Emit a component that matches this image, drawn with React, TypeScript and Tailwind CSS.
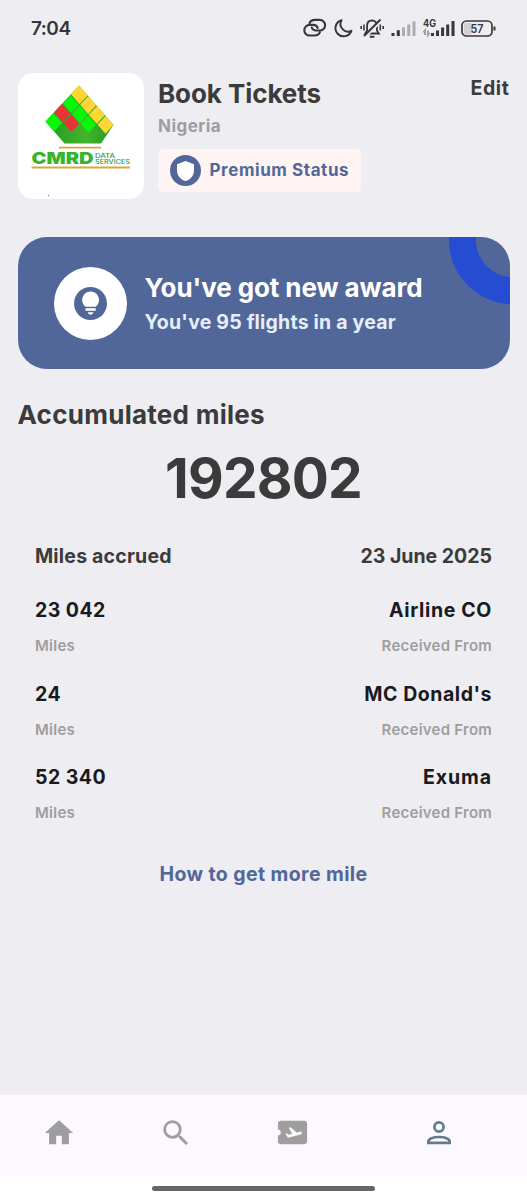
import React from "react";
import { MdAirplaneTicket, MdHome, MdSearch } from "react-icons/md";

const miles = [
  { amount: "23 042", from: "Airline CO", spacing: "tracking-[0.65px]" },
  { amount: "24", from: "MC Donald's", spacing: "tracking-[0.55px]" },
  { amount: "52 340", from: "Exuma", spacing: "tracking-[0.9px]" },
];

function StatusBar() {
  return (
    <div className="flex h-[57px] items-center justify-between px-[31px]">
      <span className="text-[19px] font-semibold leading-none tracking-[-0.5px] text-[#353538]">7:04</span>

      <svg className="mb-[2px]" width="194" height="30" viewBox="0 0 194 30" fill="none" stroke="#38383b" strokeWidth="2">
        {/* Link */}
        <g strokeLinecap="round" strokeWidth="2.1">
          <path d="M7.5 10.200C8.3 7.900 10.300 6.900 13 6.900h4.800a5.300 5.300 0 0 1 0 10.600h-3.500c-2.500 0-4-1.200-4.500-3" />
          <path d="M7.5 10.200C8.3 7.900 10.300 6.900 13 6.900h4.800a5.300 5.300 0 0 1 0 10.600h-3.500c-2.500 0-4-1.200-4.500-3" transform="rotate(180 12.700 14.700)" />
        </g>
        {/* Do not disturb */}
        <path d="M39.500 7.200a8.200 8.200 0 1 0 9.900 10.600 7.600 7.600 0 0 1-9.900-10.600Z" strokeLinejoin="round" />
        {/* Muted bell */}
        <path d="M63.2 20.5h13.700l-2-3v-4.800c0-3.200-1.900-5.200-4.900-5.200s-4.900 2-4.900 5.200v4.800l-1.900 3Z" strokeWidth="1.8" />
        <path d="M67.800 23.800h4.600" />
        <path d="M63.500 24 79.500 8" stroke="#ededf2" strokeWidth="2" />
        <path d="M62 23 78.500 6.500" />
        <path d="M62 11.500v6M59.200 13v3M78.300 11.500v6M81.200 13v3" strokeWidth="1.6" />
        {/* First SIM */}
        <g strokeWidth="3">
          <path d="M91 20v3M96.300 17.300V23" />
          <path d="M101.500 14.500V23M106.700 11.500V23M112 8.300V23" stroke="#adadb1" />
        </g>
        {/* Second SIM */}
        <g strokeWidth="3">
          <path d="M130.500 20v3M135.500 17.500V23M140.600 14.500V23M145.700 11.500V23M151 8V23" />
        </g>
        <path d="M123 22v-4.500l-1.500 2M126 17.500V22l1.500-2" stroke="#a0a0a4" />
        <text x="121" y="13.500" fontSize="10" fontWeight="700" fill="#38383b" stroke="none" fontFamily="Inter, sans-serif" textLength="13" lengthAdjust="spacingAndGlyphs">
          4G
        </text>
        {/* Battery */}
        <rect x="162" y="10" width="8" height="11.500" rx="2" fill="#d0d0d5" stroke="none" />
        <rect x="160" y="8" width="30" height="15" rx="4.500" strokeWidth="1.700" />
        <path d="M192.500 13.500v4" />
        <text x="175" y="19.700" fontSize="11.500" fontWeight="600" textAnchor="middle" fill="#38383b" stroke="none" fontFamily="Inter, sans-serif" textLength="13" lengthAdjust="spacingAndGlyphs">
          57
        </text>
      </svg>
    </div>
  );
}

function Logo() {
  return (
    <svg width="126" height="126" viewBox="0 0 126 126">
      <defs>
        <linearGradient id="base" x1="0" x2="1">
          <stop offset="0" stopColor="#239a22" />
          <stop offset=".6" stopColor="#43b52b" />
          <stop offset="1" stopColor="#249823" />
        </linearGradient>
      </defs>
      <path d="M27.500 48.500 61 12.500l34.500 39.500L83 70.500H46.500Z" fill="url(#base)" />
      {/* Tiles, cut along both diagonals */}
      <g transform="matrix(.719 .823 -.7 .75 61 12.500)">
        <rect width="12" height="11.500" fill="#ffd633" />
        <rect x="13" width="11" height="11.500" fill="#ffd633" />
        <rect x="25" width="11" height="11.500" fill="#ffd633" />
        <rect x="37" width="11" height="11.500" fill="#ffd633" />
        <rect y="12.500" width="12" height="11" fill="#09f509" />
        <rect x="13" y="12.500" width="11" height="11" fill="#09f509" />
        <rect x="25" y="12.500" width="11" height="11" fill="#09f509" />
        <rect y="24.500" width="12" height="11" fill="#e83436" />
        <rect x="13" y="24.500" width="11" height="11" fill="#e83436" />
        <rect y="36.500" width="12" height="11.500" fill="#09f509" />
      </g>
      <path d="M41 74.700h42M13.500 94.500h98.500" stroke="#dda53c" strokeWidth="1.800" />
      <text x="13.500" y="91" fontSize="16" fontWeight="900" fill="#35b52b" fontFamily="Inter, sans-serif" textLength="62" lengthAdjust="spacingAndGlyphs">
        CMRD
      </text>
      <text x="77" y="84.500" fontSize="6" fontWeight="500" fill="#2a9a46" fontFamily="Inter, sans-serif" textLength="20" lengthAdjust="spacingAndGlyphs">
        DATA
      </text>
      <text x="77" y="90.500" fontSize="6" fontWeight="500" fill="#2a9a46" fontFamily="Inter, sans-serif" textLength="35" lengthAdjust="spacingAndGlyphs">
        SERVICES
      </text>
      <circle cx="30.500" cy="122.500" r=".7" fill="#777" />
    </svg>
  );
}

function Profile() {
  return (
    <div className="mx-[17.5px] mt-4 flex h-[126px]">
      <div className="h-[126px] w-[126px] overflow-hidden rounded-[15px] bg-white">
        <Logo />
      </div>
      <div className="ml-[14.5px] flex flex-col items-start">
        <h1 className="mt-[6px] text-[26px] font-bold leading-[30px] tracking-[-0.08px]">Book Tickets</h1>
        <p className="mt-[7px] text-[17px] font-bold leading-5 tracking-[0.45px] text-[#9e9e9e]">Nigeria</p>
        <div className="mt-[13px] flex h-[43px] w-[203px] items-center rounded-[5px] bg-[#fef4f3] pl-3">
          <div className="flex h-[31px] w-[31px] items-center justify-center rounded-full bg-[#526799]">
            <svg width="17" height="20" viewBox="0 0 17 20" fill="#fff">
              <path d="M8.500 0 17 3.200v6.300c0 4.900-3.500 9.200-8.500 10.500C3.500 18.700 0 14.400 0 9.500V3.200Z" />
            </svg>
          </div>
          <span className="ml-[8.5px] whitespace-nowrap text-[17px] font-bold tracking-[0.58px] text-[#526799]">
            Premium Status
          </span>
        </div>
      </div>
      <span className="ml-auto mt-[3px] text-[19.5px] font-bold leading-6 tracking-[0.6px]">Edit</span>
    </div>
  );
}

function AwardCard() {
  return (
    <div className="relative mx-[17.5px] mt-[38px] flex h-[132px] items-center overflow-hidden rounded-[29px] bg-[#526799] pl-[36.5px]">
      <div className="absolute -right-[67px] -top-[61px] h-[128px] w-[128px] rounded-full border-[27px] border-[#264cd2]" />
      <div className="flex h-[73px] w-[73px] items-center justify-center rounded-full bg-white">
        <svg width="33" height="33" viewBox="0 0 33 33" fill="#fff">
          <circle cx="16.5" cy="16.5" r="16.5" fill="#526799" />
          <path d="M16.600 4.500a8.500 8.500 0 0 0-5.100 15.200h10.200A8.500 8.500 0 0 0 16.600 4.500Z" />
          <path d="M11.500 21.200h10.200v2.600H11.500ZM13.800 25.200h5.600c-.4 1.500-1.400 2.300-2.800 2.300s-2.400-.8-2.800-2.300Z" />
        </svg>
      </div>
      <div className="ml-[17.5px] mt-1">
        <p className="text-[26px] font-bold leading-[34px] tracking-[-0.1px] text-white">You've got new award</p>
        <p className="text-[19.5px] font-bold leading-[34px] tracking-[0.2px] text-[#e6eefb]">
          You've 95 flights in a year
        </p>
      </div>
    </div>
  );
}

function MilesList() {
  return (
    <div className="mt-[34px] px-[35px]">
      <div className="flex justify-between text-[19.5px] font-bold leading-6">
        <span className="tracking-[0.2px]">Miles accrued</span>
        <span>23 June 2025</span>
      </div>
      <div className="mt-[30px] flex flex-col gap-[26.5px]">
        {miles.map((row) => (
          <div key={row.from} className="h-[57px]">
            <div className="flex justify-between text-[19.5px] font-bold leading-6 text-[#1a1a1e]">
              <span className="tracking-[0.45px]">{row.amount}</span>
              <span className={row.spacing}>{row.from}</span>
            </div>
            <div className="mt-[14px] flex justify-between text-[15px] font-semibold leading-5 tracking-[0.24px] text-[#9e9e9e]">
              <span>Miles</span>
              <span>Received From</span>
            </div>
          </div>
        ))}
      </div>
    </div>
  );
}

function BottomNav() {
  return (
    <nav className="bg-white">
      <div className="flex h-[81px] bg-[#fdf7ff] pb-1.5 text-[#9e9e9e]">
        <div className="flex w-[117px] items-center justify-center">
          <MdHome size={34} />
        </div>
        <div className="flex w-[117px] items-center justify-center">
          <MdSearch size={34} />
        </div>
        <div className="flex w-[117px] items-center justify-center">
          <MdAirplaneTicket size={35} />
        </div>
        <div className="flex flex-1 items-center justify-center">
          <svg width="24" height="24" viewBox="0 0 24 24" fill="none" stroke="#607d8b" strokeWidth="2.700">
            <circle cx="12" cy="6" r="4.600" />
            <path d="M1.350 21.800v-1.300c0-2.600 4.700-4.500 10.650-4.500s10.650 1.900 10.650 4.500v1.300Z" />
          </svg>
        </div>
      </div>
      <div className="flex h-6 justify-center pt-[10px]">
        <div className="h-[5px] w-[223px] rounded-full bg-[#666666]" />
      </div>
    </nav>
  );
}

export default function App() {
  return (
    <div className="flex h-[1200px] w-[527px] flex-col overflow-hidden bg-[#ededf2] font-['Inter',sans-serif] text-[#3b3b3b]">
      <StatusBar />
      <Profile />
      <AwardCard />
      <h2 className="ml-[17.5px] mt-[29px] text-[26px] font-bold leading-[34px] tracking-[0.27px]">Accumulated miles</h2>
      <p className="mt-[14px] text-center text-[55px] font-bold leading-[64px] tracking-[-0.8px]">192802</p>
      <MilesList />
      <p className="mt-[40px] text-center text-[19.5px] font-bold leading-6 tracking-[0.4px] text-[#526799]">
        How to get more mile
      </p>
      <div className="mt-auto">
        <BottomNav />
      </div>
    </div>
  );
}
